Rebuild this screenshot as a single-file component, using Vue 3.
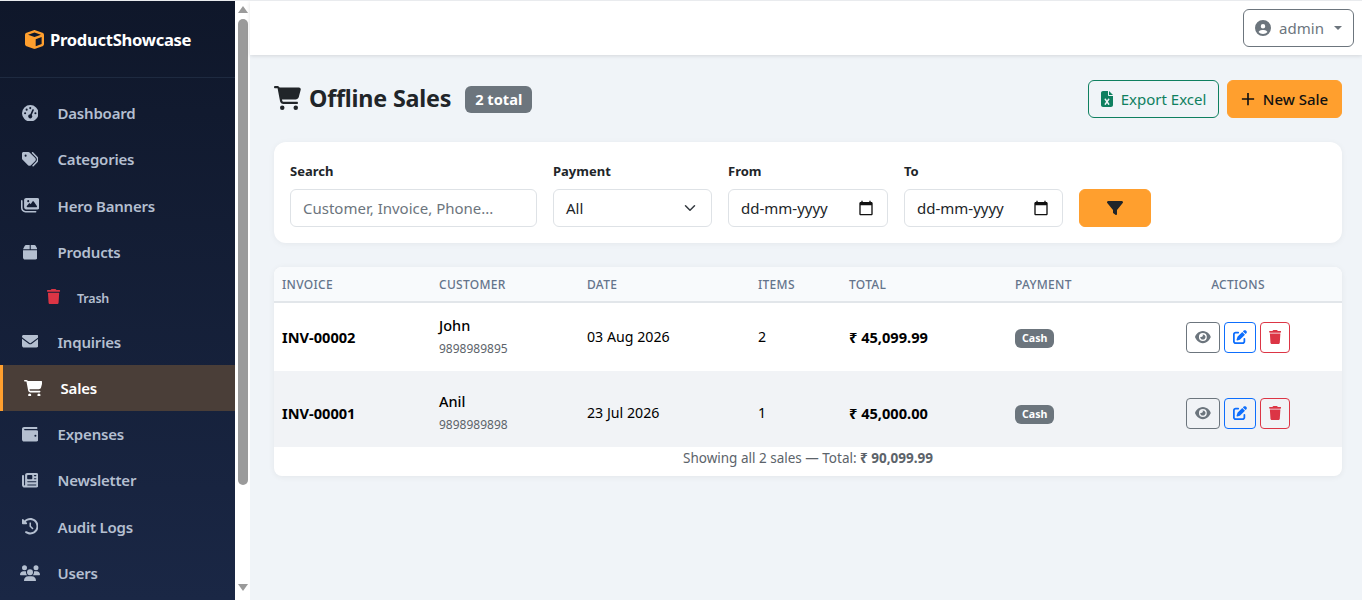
<script setup>
import { h } from 'vue'

const icons = {
  gauge: [512, 'M0 256a256 256 0 1 1 512 0A256 256 0 1 1 0 256zM288 96a32 32 0 1 0 -64 0 32 32 0 1 0 64 0zM256 416c35.3 0 64-28.7 64-64c0-17.4-6.9-33.1-18.1-44.6L366 161.7c5.3-12.1-.2-26.3-12.3-31.6s-26.3 .2-31.6 12.3L257.9 288c-.6 0-1.3 0-1.9 0c-35.3 0-64 28.7-64 64s28.7 64 64 64zM176 144a32 32 0 1 0 -64 0 32 32 0 1 0 64 0zM96 288a32 32 0 1 0 0-64 32 32 0 1 0 0 64zm352-32a32 32 0 1 0 -64 0 32 32 0 1 0 64 0z'],
  tags: [512, 'M345 39.1L472.8 168.4c52.4 53 52.4 138.2 0 191.2L360.8 472.9c-9.3 9.4-24.5 9.5-33.9 .2s-9.5-24.5-.2-33.9L438.6 325.9c33.9-34.3 33.9-89.4 0-123.7L310.9 72.9c-9.3-9.4-9.2-24.6 .2-33.9s24.6-9.2 33.9 .2zM0 229.5V80C0 53.5 21.5 32 48 32H197.5c17 0 33.3 6.7 45.3 18.7l168 168c25 25 25 65.5 0 90.5L277.3 442.7c-25 25-65.5 25-90.5 0l-168-168C6.7 262.7 0 246.5 0 229.5zM144 144a32 32 0 1 0 -64 0 32 32 0 1 0 64 0z'],
  images: [576, 'M160 32c-35.3 0-64 28.7-64 64V320c0 35.3 28.7 64 64 64H512c35.3 0 64-28.7 64-64V96c0-35.3-28.7-64-64-64H160zM396 138.7l96 144c4.9 7.4 5.4 16.8 1.2 24.6S480.9 320 472 320H328 280 200c-9.2 0-17.6-5.3-21.6-13.6s-2.9-18.2 2.9-25.4l64-80c4.6-5.7 11.4-9 18.7-9s14.2 3.3 18.7 9l17.3 21.6 56-84C360.5 132 368 128 376 128s15.5 4 20 10.7zM192 128a32 32 0 1 1 64 0 32 32 0 1 1 -64 0zM48 120c0-13.3-10.7-24-24-24S0 106.7 0 120V344c0 75.1 60.9 136 136 136H456c13.3 0 24-10.7 24-24s-10.7-24-24-24H136c-48.6 0-88-39.4-88-88V120z'],
  box: [448, 'M50.7 58.5L0 160H208V32H93.7C75.5 32 58.9 42.3 50.7 58.5zM240 160H448L397.3 58.5C389.1 42.3 372.5 32 354.3 32H240V160zm208 32H0V416c0 35.3 28.7 64 64 64H384c35.3 0 64-28.7 64-64V192z'],
  trash: [448, 'M135.2 17.7L128 32H32C14.3 32 0 46.3 0 64S14.3 96 32 96H416c17.7 0 32-14.3 32-32s-14.3-32-32-32H320l-7.2-14.3C307.4 6.8 296.3 0 284.2 0H163.8c-12.1 0-23.2 6.8-28.6 17.7zM416 128H32L53.2 467c1.6 25.3 22.6 45 47.9 45H346.9c25.3 0 46.3-19.7 47.9-45L416 128z'],
  envelope: [512, 'M48 64C21.5 64 0 85.5 0 112c0 15.1 7.1 29.3 19.2 38.4L236.8 313.6c11.4 8.5 27 8.5 38.4 0L492.8 150.4c12.1-9.1 19.2-23.3 19.2-38.4c0-26.5-21.5-48-48-48H48zM0 176V384c0 35.3 28.7 64 64 64H448c35.3 0 64-28.7 64-64V176L294.4 339.2c-22.8 17.1-54 17.1-76.8 0L0 176z'],
  cart: [576, 'M0 24C0 10.7 10.7 0 24 0H69.5c22 0 41.5 12.8 50.6 32h411c26.3 0 45.5 25 38.6 50.4l-41 152.3c-8.5 31.4-37 53.3-69.5 53.3H170.7l5.4 28.5c2.2 11.3 12.1 19.5 23.6 19.5H488c13.3 0 24 10.7 24 24s-10.7 24-24 24H199.7c-34.6 0-64.3-24.6-70.7-58.5L77.4 54.5c-.7-3.8-4-6.5-7.9-6.5H24C10.7 48 0 37.3 0 24zM128 464a48 48 0 1 1 96 0 48 48 0 1 1 -96 0zm336-48a48 48 0 1 1 0 96 48 48 0 1 1 0-96z'],
  wallet: [512, 'M64 32C28.7 32 0 60.7 0 96V416c0 35.3 28.7 64 64 64H448c35.3 0 64-28.7 64-64V192c0-35.3-28.7-64-64-64H80c-8.8 0-16-7.2-16-16s7.2-16 16-16H448c17.7 0 32-14.3 32-32s-14.3-32-32-32H64zM416 272a32 32 0 1 1 0 64 32 32 0 1 1 0-64z'],
  newspaper: [512, 'M96 96c0-35.3 28.7-64 64-64H448c35.3 0 64 28.7 64 64V416c0 35.3-28.7 64-64 64H80c-44.2 0-80-35.8-80-80V128c0-17.7 14.3-32 32-32s32 14.3 32 32V400c0 8.8 7.2 16 16 16s16-7.2 16-16V96zm64 24v80c0 13.3 10.7 24 24 24H296c13.3 0 24-10.7 24-24V120c0-13.3-10.7-24-24-24H184c-13.3 0-24 10.7-24 24zm208-8c0 8.8 7.2 16 16 16h48c8.8 0 16-7.2 16-16s-7.2-16-16-16H384c-8.8 0-16 7.2-16 16zm0 96c0 8.8 7.2 16 16 16h48c8.8 0 16-7.2 16-16s-7.2-16-16-16H384c-8.8 0-16 7.2-16 16zM160 304c0 8.8 7.2 16 16 16H432c8.8 0 16-7.2 16-16s-7.2-16-16-16H176c-8.8 0-16 7.2-16 16zm0 96c0 8.8 7.2 16 16 16H432c8.8 0 16-7.2 16-16s-7.2-16-16-16H176c-8.8 0-16 7.2-16 16z'],
  history: [512, 'M75 75L41 41C25.9 25.9 0 36.6 0 57.9V168c0 13.3 10.7 24 24 24H134.1c21.4 0 32.1-25.9 17-41l-30.8-30.8C155 85.5 203 64 256 64c106 0 192 86 192 192s-86 192-192 192c-40.8 0-78.6-12.7-109.7-34.4c-14.5-10.1-34.4-6.6-44.6 7.9s-6.6 34.4 7.9 44.6C151.2 495 201.7 512 256 512c141.4 0 256-114.6 256-256S397.4 0 256 0C185.3 0 121.3 28.7 75 75zm181 53c-13.3 0-24 10.7-24 24V256c0 6.4 2.5 12.5 7 17l72 72c9.4 9.4 24.6 9.4 33.9 0s9.4-24.6 0-33.9l-65-65V152c0-13.3-10.7-24-24-24z'],
  users: [640, 'M144 0a80 80 0 1 1 0 160A80 80 0 1 1 144 0zM512 0a80 80 0 1 1 0 160A80 80 0 1 1 512 0zM0 298.7C0 239.8 47.8 192 106.7 192h42.7c15.9 0 31 3.5 44.6 9.7c-1.3 7.2-1.9 14.7-1.9 22.3c0 38.2 16.8 72.5 43.3 96c-.2 0-.4 0-.7 0H21.3C9.6 320 0 310.4 0 298.7zM405.3 320c-.2 0-.4 0-.7 0c26.6-23.5 43.3-57.8 43.3-96c0-7.6-.7-15-1.9-22.3c13.6-6.3 28.7-9.7 44.6-9.7h42.7C592.2 192 640 239.8 640 298.7c0 11.8-9.6 21.3-21.3 21.3H405.3zM224 224a96 96 0 1 1 192 0 96 96 0 1 1 -192 0zM128 485.3C128 411.7 187.7 352 261.3 352H378.7C452.3 352 512 411.7 512 485.3c0 14.7-11.9 26.7-26.7 26.7H154.7c-14.7 0-26.7-11.9-26.7-26.7z'],
  cube: [512, 'M234.5 5.7c13.9-5 29.1-5 43.1 0l192 68.6C495 83.4 512 107.5 512 134.6V377.4c0 27-17 51.2-42.5 60.3l-192 68.6c-13.9 5-29.1 5-43.1 0l-192-68.6C17 428.6 0 404.5 0 377.4V134.6c0-27 17-51.2 42.5-60.3l192-68.6zM256 66L82.3 128 256 190l173.7-62L256 66zm32 368.6l160-57.1v-188L288 246.6v188z'],
  excel: [384, 'M64 0C28.7 0 0 28.7 0 64V448c0 35.3 28.7 64 64 64H320c35.3 0 64-28.7 64-64V160H256c-17.7 0-32-14.3-32-32V0H64zM256 0V128H384L256 0zM155.7 250.2L192 302.1l36.3-51.9c7.6-10.9 22.6-13.5 33.4-5.9s13.5 22.6 5.9 33.4L221.3 344l46.4 66.2c7.6 10.9 5 25.8-5.9 33.4s-25.8 5-33.4-5.9L192 385.8l-36.3 51.9c-7.6 10.9-22.6 13.5-33.4 5.9s-13.5-22.6-5.9-33.4L162.7 344l-46.4-66.2c-7.6-10.9-5-25.8 5.9-33.4s25.8-5 33.4 5.9z'],
  filter: [512, 'M3.9 54.9C10.5 40.9 24.5 32 40 32H472c15.5 0 29.5 8.9 36.1 22.9s4.6 30.5-5.2 42.5L320 320.9V448c0 12.1-6.8 23.2-17.7 28.6s-23.8 4.3-33.5-3l-64-48c-8.1-6-12.8-15.5-12.8-25.6V320.9L9 97.3C-.7 85.4-2.8 68.8 3.9 54.9z'],
  eye: [576, 'M288 32c-80.8 0-145.5 36.8-192.6 80.6C48.6 156 17.3 208 2.5 243.7c-3.3 7.9-3.3 16.7 0 24.6C17.3 304 48.6 356 95.4 399.4C142.5 443.2 207.2 480 288 480s145.5-36.8 192.6-80.6c46.8-43.5 78.1-95.4 93-131.1c3.3-7.9 3.3-16.7 0-24.6c-14.9-35.7-46.2-87.7-93-131.1C433.5 68.8 368.8 32 288 32zM144 256a144 144 0 1 1 288 0 144 144 0 1 1 -288 0zm144-64c0 35.3-28.7 64-64 64c-7.1 0-13.9-1.2-20.3-3.3c-5.5-1.8-11.9 1.6-11.7 7.4c.3 6.9 1.3 13.8 3.2 20.7c13.7 51.2 66.4 81.6 117.6 67.9s81.6-66.4 67.9-117.6c-11.1-41.5-47.8-69.4-88.6-71.1c-5.8-.2-9.2 6.1-7.4 11.7c2.1 6.4 3.3 13.2 3.3 20.3z'],
  edit: [512, 'M471.6 21.7c-21.9-21.9-57.3-21.9-79.2 0L362.3 51.7l97.9 97.9 30.1-30.1c21.9-21.9 21.9-57.3 0-79.2L471.6 21.7zm-299.2 220c-6.1 6.1-10.8 13.6-13.5 21.9l-29.6 88.8c-2.9 8.6-.6 18.1 5.8 24.6s15.9 8.7 24.6 5.8l88.8-29.6c8.2-2.7 15.7-7.4 21.9-13.5L437.7 172.3 339.7 74.3 172.4 241.7zM96 64C43 64 0 107 0 160V416c0 53 43 96 96 96H352c53 0 96-43 96-96V320c0-17.7-14.3-32-32-32s-32 14.3-32 32v96c0 17.7-14.3 32-32 32H96c-17.7 0-32-14.3-32-32V160c0-17.7 14.3-32 32-32h96c17.7 0 32-14.3 32-32s-14.3-32-32-32H96z'],
  user: [512, 'M399 384.2C376.9 345.8 335.4 320 288 320H224c-47.4 0-88.9 25.8-111 64.2c35.2 39.2 86.2 63.8 143 63.8s107.8-24.7 143-63.8zM0 256a256 256 0 1 1 512 0A256 256 0 1 1 0 256zm256 16a72 72 0 1 0 0-144 72 72 0 1 0 0 144z']
}

// font awesome style icon, sized by css height
const Fa = (props) => {
  const [w, d] = icons[props.name]
  return h('svg', { viewBox: `0 0 ${w} 512`, fill: 'currentColor', 'aria-hidden': 'true' }, [h('path', { d })])
}

const navItems = [
  { label: 'Dashboard', icon: 'gauge' },
  { label: 'Categories', icon: 'tags' },
  { label: 'Hero Banners', icon: 'images' },
  { label: 'Products', icon: 'box' },
  { label: 'Trash', icon: 'trash', sub: true },
  { label: 'Inquiries', icon: 'envelope' },
  { label: 'Sales', icon: 'cart', active: true },
  { label: 'Expenses', icon: 'wallet' },
  { label: 'Newsletter', icon: 'newspaper' },
  { label: 'Audit Logs', icon: 'history' },
  { label: 'Users', icon: 'users' }
]

const sales = [
  { invoice: 'INV-00002', name: 'John', phone: '9898989895', date: '03 Aug 2026', items: 2, total: '₹ 45,099.99', payment: 'Cash' },
  { invoice: 'INV-00001', name: 'Anil', phone: '9898989898', date: '23 Jul 2026', items: 1, total: '₹ 45,000.00', payment: 'Cash' }
]
</script>

<template>
  <div class="shell">
    <aside class="sidebar">
      <div class="brand">
        <Fa name="cube" class="brand-icon" />
        <span>ProductShowcase</span>
      </div>
      <nav class="nav">
        <a
          v-for="item in navItems"
          :key="item.label"
          class="nav-item"
          :class="{ sub: item.sub, active: item.active }"
        >
          <span class="nav-icon"><Fa :name="item.icon" /></span>
          <span>{{ item.label }}</span>
        </a>
      </nav>
    </aside>

    <div class="rail">
      <span class="arrow up"></span>
      <span class="thumb"></span>
      <span class="arrow down"></span>
    </div>

    <div class="main">
      <header class="topbar">
        <button class="user-btn">
          <Fa name="user" />
          <span>admin</span>
          <i class="caret"></i>
        </button>
      </header>

      <div class="content">
        <div class="page-head">
          <h1><Fa name="cart" /><span>Offline Sales</span></h1>
          <span class="total-badge">2 total</span>
          <div class="head-actions">
            <button class="btn btn-export"><Fa name="excel" />Export Excel</button>
            <button class="btn btn-new">
              <svg viewBox="0 0 16 16" fill="none" stroke="currentColor" stroke-width="1.9"><path d="M8 1v14M1 8h14" /></svg>
              New Sale
            </button>
          </div>
        </div>

        <section class="filters">
          <div class="field">
            <label>Search</label>
            <input class="control" type="text" placeholder="Customer, Invoice, Phone..." />
          </div>
          <div class="field">
            <label>Payment</label>
            <div class="control faux">
              <span>All</span>
              <svg class="chevron" viewBox="0 0 16 16" fill="none" stroke="currentColor" stroke-width="2" stroke-linecap="round" stroke-linejoin="round"><path d="M2 5l6 6 6-6" /></svg>
            </div>
          </div>
          <div class="field" v-for="name in ['From', 'To']" :key="name">
            <label>{{ name }}</label>
            <div class="control faux">
              <span>dd-mm-yyyy</span>
              <svg class="calendar" viewBox="0 0 24 24" fill="currentColor"><path d="M20 3h-1V1h-2v2H7V1H5v2H4C2.9 3 2 3.900 2 5v16c0 1.100.9 2 2 2h16c1.100 0 2-.9 2-2V5c0-1.100-.9-2-2-2zm0 18H4V8h16v13z" /></svg>
            </div>
          </div>
          <button class="btn-filter"><Fa name="filter" /></button>
        </section>

        <section class="table-card">
          <table>
            <colgroup>
              <col style="width: 157px" />
              <col style="width: 148px" />
              <col style="width: 171px" />
              <col style="width: 91px" />
              <col style="width: 166px" />
              <col style="width: 127px" />
              <col />
            </colgroup>
            <thead>
              <tr>
                <th>Invoice</th>
                <th>Customer</th>
                <th>Date</th>
                <th>Items</th>
                <th>Total</th>
                <th>Payment</th>
                <th class="center">Actions</th>
              </tr>
            </thead>
            <tbody>
              <tr v-for="sale in sales" :key="sale.invoice">
                <td class="strong">{{ sale.invoice }}</td>
                <td>
                  <div class="cust">{{ sale.name }}</div>
                  <div class="phone">{{ sale.phone }}</div>
                </td>
                <td>{{ sale.date }}</td>
                <td>{{ sale.items }}</td>
                <td class="strong">{{ sale.total }}</td>
                <td><span class="pay-badge">{{ sale.payment }}</span></td>
                <td>
                  <div class="row-actions">
                    <button class="act act-view"><Fa name="eye" /></button>
                    <button class="act act-edit"><Fa name="edit" /></button>
                    <button class="act act-del"><Fa name="trash" /></button>
                  </div>
                </td>
              </tr>
            </tbody>
          </table>
          <div class="table-foot">Showing all 2 sales — Total: <b>₹ 90,099.99</b></div>
        </section>
      </div>
    </div>
  </div>
</template>

<style>
html, body {
  margin: 0;
  background: #fff;
}
</style>

<style scoped>
.shell {
  display: flex;
  height: 599px;
  border-top: 1px solid #e9ebee;
  overflow: hidden;
  font-family: "Noto Sans", "Open Sans", sans-serif;
  color: #212529;
}

.sidebar {
  width: 235px;
  flex-shrink: 0;
  background: linear-gradient(180deg, #0f172a 0%, #1a2745 100%);
}

.brand {
  height: 76px;
  display: flex;
  align-items: center;
  gap: 6px;
  padding-left: 25px;
  border-bottom: 1px solid #1e2a40;
  color: #fff;
  font-size: 16.6px;
  font-weight: 700;
  letter-spacing: -0.3px;
}

.brand-icon {
  height: 19px;
  color: #ff9f2e;
}

.nav {
  padding-top: 12px;
}

.nav-item {
  display: flex;
  align-items: center;
  height: 46.3px;
  padding-left: 20px;
  color: #b4bfd0;
  font-size: 15px;
  font-weight: 600;
  letter-spacing: -0.2px;
  box-sizing: border-box;
}

.nav-icon {
  width: 20px;
  margin-right: 17.5px;
  display: flex;
  justify-content: center;
}

.nav-icon svg {
  height: 16.5px;
}

.nav-item.active {
  background: #4a3e38;
  border-left: 3px solid #ff9f2e;
  color: #fff;
}

.nav-item.sub {
  height: 43.2px;
  padding-left: 44px;
  padding-top: 3px;
  font-size: 12.5px;
}

.nav-item.sub .nav-icon {
  margin-right: 13px;
  color: #dc3545;
}

.nav-item.sub .nav-icon svg {
  height: 15px;
  margin-top: -3px;
}

.rail {
  width: 15px;
  flex-shrink: 0;
  background: #fff;
  display: flex;
  flex-direction: column;
  align-items: center;
}

.arrow {
  width: 0;
  height: 0;
  border-left: 5px solid transparent;
  border-right: 5px solid transparent;
}

.arrow.up {
  margin-top: 5px;
  border-bottom: 7px solid #9a9a9a;
}

.arrow.down {
  margin-top: 99px;
  border-top: 7px solid #9a9a9a;
}

.thumb {
  width: 10px;
  height: 466px;
  margin-top: 6px;
  border-radius: 5px;
  background: #9a9a9a;
}

.main {
  flex: 1;
  min-width: 0;
  display: flex;
  flex-direction: column;
  background: #f0f4f8;
}

.topbar {
  height: 54px;
  flex-shrink: 0;
  display: flex;
  align-items: center;
  justify-content: flex-end;
  padding-right: 8px;
  background: #fff;
  box-shadow: 0 1px 4px rgba(0, 0, 0, 0.12);
}

.user-btn {
  width: 111px;
  height: 38px;
  display: flex;
  align-items: center;
  justify-content: center;
  gap: 8px;
  background: #fff;
  border: 1px solid #6c757d;
  border-radius: 6px;
  color: #6c757d;
  font: inherit;
  font-size: 15px;
}

.user-btn svg {
  height: 16px;
}

.caret {
  width: 0;
  height: 0;
  border-left: 4.5px solid transparent;
  border-right: 4.5px solid transparent;
  border-top: 4.5px solid #6c757d;
  margin-left: 2px;
}

.content {
  padding: 25px 20px 0 24px;
}

.page-head {
  display: flex;
  align-items: center;
  height: 38px;
  margin-bottom: 24px;
}

h1 {
  display: flex;
  align-items: center;
  gap: 8px;
  margin: -2px 0 0;
  font-size: 23.3px;
  font-weight: 700;
  letter-spacing: -0.2px;
  color: #212529;
}

h1 svg {
  height: 24px;
}

.total-badge {
  margin: 1px 0 0 14px;
  padding: 0 10px;
  height: 27px;
  line-height: 27px;
  background: #6c757d;
  color: #fff;
  border-radius: 6px;
  font-size: 14.6px;
  font-weight: 700;
}

.head-actions {
  margin-left: auto;
  display: flex;
  gap: 8px;
}

.btn {
  height: 38px;
  display: flex;
  align-items: center;
  justify-content: center;
  gap: 8px;
  border-radius: 6px;
  font: inherit;
  font-size: 15px;
  box-sizing: border-box;
}

.btn svg {
  height: 16px;
}

.btn-export {
  width: 131px;
  background: transparent;
  border: 1px solid #0f8060;
  color: #0f8060;
}

.btn-new {
  width: 115px;
  background: #ff9f2e;
  border: 1px solid #ff9f2e;
  color: #111;
  font-weight: 500;
}

.btn-new svg {
  height: 14px;
  width: 14px;
}

.filters {
  display: grid;
  grid-template-columns: 247px 159px 160px 159px 72px;
  gap: 16px;
  align-items: end;
  padding: 20px 16px 16px;
  background: #fff;
  border-radius: 12px;
  box-shadow: 0 1px 6px rgba(0, 0, 0, 0.05);
}

.field label {
  display: block;
  margin-bottom: 9px;
  font-size: 13px;
  font-weight: 700;
  line-height: 18px;
  color: #212529;
}

.control {
  display: block;
  width: 100%;
  height: 38px;
  padding: 0 12px;
  box-sizing: border-box;
  background: #fff;
  border: 1px solid #dee2e6;
  border-radius: 6px;
  font: inherit;
  font-size: 15px;
  color: #212529;
}

.control::placeholder {
  color: #6c757d;
  opacity: 1;
}

.faux {
  display: flex;
  align-items: center;
  justify-content: space-between;
}

.chevron {
  width: 12px;
  height: 12px;
  margin-right: 3px;
  color: #343a40;
}

.calendar {
  width: 16px;
  height: 16px;
  margin-right: 1px;
  color: #111;
}

.btn-filter {
  height: 38px;
  border: 1px solid #ff9f2e;
  border-radius: 6px;
  background: #ff9f2e;
  color: #212529;
  display: flex;
  align-items: center;
  justify-content: center;
}

.btn-filter svg {
  height: 16px;
}

.table-card {
  margin-top: 24px;
  background: #fff;
  border-radius: 8px;
  overflow: hidden;
  box-shadow: 0 1px 6px rgba(0, 0, 0, 0.06);
}

table {
  width: 100%;
  border-collapse: collapse;
  table-layout: fixed;
  font-size: 14.2px;
  color: #000;
}

th {
  height: 34px;
  padding: 0 8px;
  text-align: left;
  background: #f8fafc;
  border-bottom: 2px solid #e2e6ea;
  color: #64748b;
  font-size: 12px;
  font-weight: 500;
  letter-spacing: 0.3px;
  text-transform: uppercase;
}

th.center {
  text-align: center;
}

td {
  height: 69px;
  padding: 0 8px 1px;
  box-sizing: border-box;
  vertical-align: middle;
}

tbody tr:nth-child(2) {
  background: #f1f3f6;
}

tbody tr:nth-child(2) td {
  height: 76px;
  padding-top: 8px;
}

.strong {
  font-size: 14.6px;
  font-weight: 700;
}

.cust {
  font-size: 14.5px;
  font-weight: 500;
  line-height: 20px;
  margin-top: -2px;
}

.phone {
  margin-top: 6px;
  font-size: 12px;
  line-height: 16px;
  color: #5c636a;
}

.pay-badge {
  display: inline-block;
  margin-top: 3px;
  padding: 0 7px;
  height: 19px;
  line-height: 19px;
  background: #6c757d;
  color: #fff;
  border-radius: 6px;
  font-size: 10.6px;
  font-weight: 700;
}

.row-actions {
  display: flex;
  justify-content: center;
  gap: 4px;
  margin-top: 1px;
}

.act {
  height: 31px;
  padding: 0;
  display: flex;
  align-items: center;
  justify-content: center;
  background: transparent;
  border: 1px solid;
  border-radius: 4px;
}

.act svg {
  height: 14px;
}

.act-view {
  width: 34px;
  color: #6c757d;
}

.act-edit {
  width: 32px;
  color: #0d6efd;
}

.act-del {
  width: 30px;
  color: #dc3545;
}

.table-foot {
  height: 29px;
  text-align: center;
  font-size: 13.5px;
  line-height: 22px;
  color: #5c636a;
}
</style>
